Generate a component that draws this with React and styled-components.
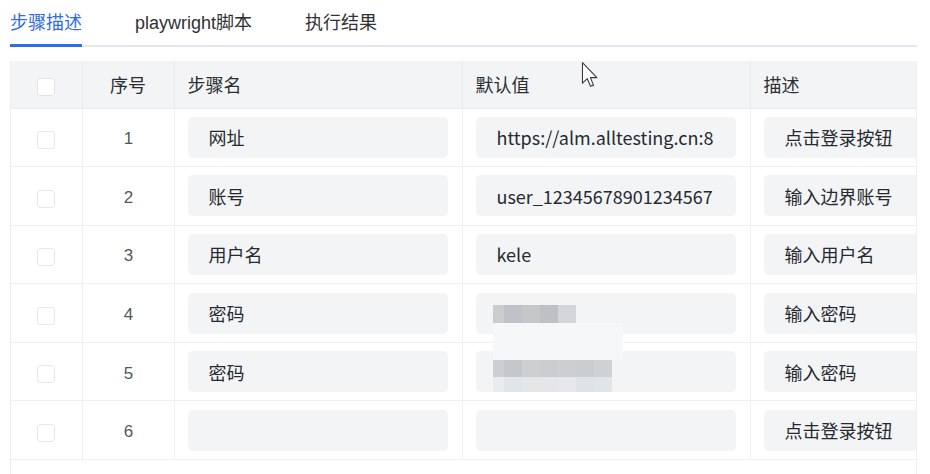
import React from "react";
import styled, { createGlobalStyle } from "styled-components";

const GlobalStyle = createGlobalStyle`
  html, body {
    margin: 0;
    padding: 0;
    background: #ffffff;
    overflow: hidden;
  }
  body {
    font-family: "Noto Sans CJK SC", "Noto Sans", sans-serif;
    color: #303133;
  }
`;

const Page = styled.div`
  position: relative;
  width: 930px;
  height: 474px;
  overflow: hidden;
  padding: 0 13px 0 10px;
  box-sizing: border-box;
`;

const TabBar = styled.div`
  display: flex;
  align-items: center;
  gap: 53px;
  height: 45px;
  border-bottom: 2px solid #e4e7ed;
`;

const Tab = styled.div`
  position: relative;
  height: 45px;
  display: flex;
  align-items: center;
  padding-bottom: 4px;
  box-sizing: border-box;
  font-family: "Liberation Sans", "Noto Sans CJK SC", sans-serif;
  font-size: 18px;
  color: ${(p) => (p.$active ? "#2f6bea" : "#303133")};

  &::after {
    content: "";
    display: ${(p) => (p.$active ? "block" : "none")};
    position: absolute;
    left: 0;
    right: 0;
    bottom: -2px;
    height: 3px;
    background: #2f6bea;
  }
`;

const TableWrap = styled.div`
  position: relative;
  margin-top: 14px;
  height: 420px;
  overflow: hidden;
  border-left: 1px solid #ebeef5;
  border-right: 1px solid #ebeef5;
  box-sizing: border-box;
`;

const Table = styled.table`
  table-layout: fixed;
  border-collapse: collapse;
  width: 1026px;
`;

const HeadCell = styled.th`
  height: 47px;
  padding: 0 0 0 ${(p) => (p.$center ? 0 : 13)}px;
  background: #f3f4f6;
  border-right: 1px solid #e9ebef;
  border-bottom: 1px solid #e9ebef;
  text-align: ${(p) => (p.$center ? "center" : "left")};
  font-weight: 400;
  font-size: 18px;
  color: #2a2d31;
  box-sizing: border-box;
`;

const Row = styled.tr`
  height: 58.6px;
`;

const Cell = styled.td`
  padding: 0 14px 0 13px;
  border-right: 1px solid #eef0f3;
  border-bottom: 1px solid #eef0f3;
  text-align: ${(p) => (p.$center ? "center" : "left")};
  box-sizing: border-box;
  vertical-align: middle;
`;

const IndexText = styled.span`
  font-family: "Liberation Sans", Arial, sans-serif;
  font-size: 17px;
  color: #54575c;
  padding-left: 2px;
`;

const Check = styled.span`
  display: inline-block;
  width: 16px;
  height: 16px;
  border: 1px solid ${(p) => (p.$head ? "#e1e3e8" : "#e6e8ec")};
  border-radius: 3px;
  background: #ffffff;
  vertical-align: middle;
`;

const Field = styled.div`
  height: 41px;
  border-radius: 5px;
  background: #f3f4f6;
  padding-left: 21px;
  display: flex;
  align-items: center;
  font-family: "Noto Sans CJK SC", sans-serif;
  font-size: 18px;
  color: #262a30;
  white-space: nowrap;
  overflow: hidden;
`;

/* redaction mosaic laid over the password values */
const Mosaic = styled.div`
  position: absolute;
  left: ${(p) => p.$x}px;
  top: ${(p) => p.$y}px;
  display: flex;
`;

const Tile = styled.div`
  width: ${(p) => p.$w}px;
  height: ${(p) => p.$h}px;
  background: ${(p) => p.$c};
`;

const Veil = styled.div`
  position: absolute;
  left: 482px;
  top: 262px;
  width: 130px;
  height: 37px;
  background: #f6f7f9;
`;

const Cursor = styled.svg`
  position: absolute;
  left: 581px;
  top: 62px;
`;

const rows = [
  { no: 1, name: "网址", value: "https://alm.alltesting.cn:8", desc: "点击登录按钮" },
  { no: 2, name: "账号", value: "user_12345678901234567", desc: "输入边界账号" },
  { no: 3, name: "用户名", value: "kele", desc: "输入用户名" },
  { no: 4, name: "密码", value: "", desc: "输入密码" },
  { no: 5, name: "密码", value: "", desc: "输入密码" },
  { no: 6, name: "", value: "", desc: "点击登录按钮" },
];

const widths = [11, 18, 18, 18, 18, 18, 18];
const bandA = ["#cbcccd", "#bfc2c6", "#c6c7c9", "#bec0c4", "#d4d5d8"];
const bandB = ["#ccced0", "#c5c8cb", "#cdd0d3", "#cbcccf", "#cdced1", "#cbced1", "#cfd2d5"];
const bandC = ["#e9ecef", "#e2e5e7", "#e4e6e8", "#e5e6e9", "#e6e7ea", "#dfe2e6", "#e2e5e8"];

export default function App() {
  return (
    <>
      <GlobalStyle />
      <Page>
        <TabBar>
          <Tab $active>步骤描述</Tab>
          <Tab>playwright脚本</Tab>
          <Tab>执行结果</Tab>
        </TabBar>

        <TableWrap>
          <Table>
            <colgroup>
              <col style={{ width: 71 }} />
              <col style={{ width: 92 }} />
              <col style={{ width: 288 }} />
              <col style={{ width: 288 }} />
              <col style={{ width: 287 }} />
            </colgroup>
            <thead>
              <tr>
                <HeadCell $center>
                  <Check $head />
                </HeadCell>
                <HeadCell $center>序号</HeadCell>
                <HeadCell>步骤名</HeadCell>
                <HeadCell>默认值</HeadCell>
                <HeadCell>描述</HeadCell>
              </tr>
            </thead>
            <tbody>
              {rows.map((r) => (
                <Row key={r.no}>
                  <Cell $center>
                    <Check />
                  </Cell>
                  <Cell $center>
                    <IndexText>{r.no}</IndexText>
                  </Cell>
                  <Cell>
                    <Field>{r.name}</Field>
                  </Cell>
                  <Cell>
                    <Field>{r.value}</Field>
                  </Cell>
                  <Cell>
                    <Field>{r.desc}</Field>
                  </Cell>
                </Row>
              ))}
            </tbody>
          </Table>

          <Mosaic $x={482} $y={244}>
            {bandA.map((c, i) => (
              <Tile key={i} $w={widths[i]} $h={18} $c={c} />
            ))}
          </Mosaic>
          <Veil />
          <Mosaic $x={482} $y={299}>
            {bandB.map((c, i) => (
              <Tile key={i} $w={widths[i]} $h={17} $c={c} />
            ))}
          </Mosaic>
          <Mosaic $x={482} $y={316}>
            {bandC.map((c, i) => (
              <Tile key={i} $w={widths[i]} $h={15} $c={c} />
            ))}
          </Mosaic>
        </TableWrap>

        <Cursor width="18" height="26" viewBox="0 0 12 19">
          <path
            d="M0.5 0.5 L0.5 15.5 L4 12.2 L6.4 17.8 L8.6 16.9 L6.3 11.4 L11 11.4 Z"
            fill="#ffffff"
            stroke="#3a3a3a"
            strokeWidth="0.8"
            strokeLinejoin="round"
          />
        </Cursor>
      </Page>
    </>
  );
}
